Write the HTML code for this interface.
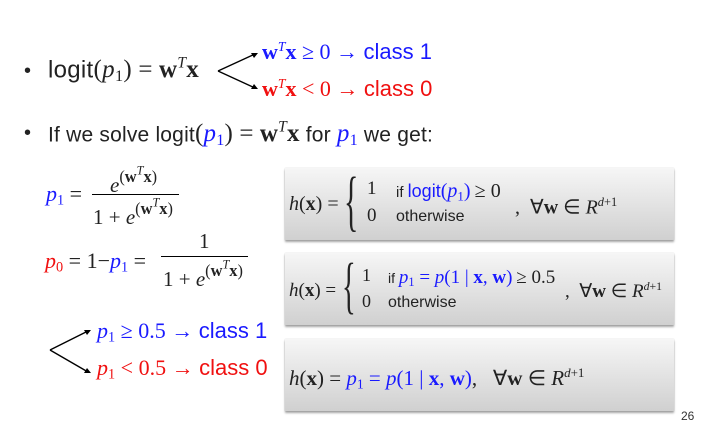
<!DOCTYPE html>
<html><head><meta charset="utf-8"><style>
body{margin:0;width:706px;height:420px;background:#fff;position:relative;overflow:hidden;font-family:"Liberation Sans",sans-serif;color:#222}
.a{position:absolute;white-space:nowrap;line-height:1}
.s{font-family:"Liberation Serif",serif}
.b{color:#1a1aff}.r{color:#f01010}
i{font-style:italic}
sub{font-size:65%;vertical-align:-0.25em}
sup{font-size:62%;vertical-align:0.6em}
.x{font-size:78%}
.e{margin:0 .25em}
.box{position:absolute;left:285px;width:389px;height:72px;background:linear-gradient(#f6f6f6,#d0d0d0);box-shadow:0 2px 2px rgba(0,0,0,.35),0 0 1px rgba(0,0,0,.2)}
.brace{font-family:"Liberation Serif",serif;font-weight:200;transform-origin:left top}
</style></head><body>
<div class="a" style="left:24px;top:61px;font-size:20px">•</div>
<div class="a" style="left:48px;top:56px;font-size:24px;letter-spacing:.3px">logit<span class="s" style="font-size:25px">(<i>p</i><sub>1</sub>)<span class="e">=</span><b>w</b><sup><i>T</i></sup><b>x</b></span></div>
<svg class="a" style="left:0;top:0" width="706" height="420">
<g stroke="#000" stroke-width="1.4" fill="none"><path d="M218 71 L255 54 M218 71 L255 88 M50 350 L88 331 M50 350 L88 372"/></g>
<g fill="#000"><path d="M258 53 l-7 0 l3 5z M258 89 l-7 0 l3-5z M91 330 l-7 0 l3 5z M91 373 l-7 0 l3-5z"/></g>
</svg>
<div class="a b" style="left:262px;top:40px;font-size:22px"><span class="s"><b>w</b><sup><i>T</i></sup><b>x</b><span class="e">≥</span>0<span class="e">→</span></span>class 1</div>
<div class="a r" style="left:262px;top:77px;font-size:22px"><span class="s"><b>w</b><sup><i>T</i></sup><b>x</b><span class="e">&lt;</span>0<span class="e">→</span></span>class 0</div>
<div class="a" style="left:24px;top:123px;font-size:20px">•</div>
<div class="a" style="left:48px;top:120px;font-size:21px;letter-spacing:.2px">If we solve logit<span class="s" style="font-size:25px">(<i class="b">p</i><sub class="b">1</sub>)<span class="e">=</span><b>w</b><sup><i>T</i></sup><b>x</b></span> for <span class="s b" style="font-size:25px"><i>p</i><sub>1</sub></span> we get:</div>
<div class="a s" style="left:46px;top:183px;font-size:22px"><span class="b"><i>p</i><sub>1</sub></span><span class="e">=</span></div>
<div class="a s" style="left:110px;top:165px;font-size:21px"><i>e</i><sup class="x">(<b>w</b><sup style="font-size:75%"><i>T</i></sup><b>x</b>)</sup></div>
<div class="a" style="left:92px;top:194px;width:87px;border-top:1px solid #000"></div>
<div class="a s" style="left:93px;top:197px;font-size:21px">1<span class="e">+</span><i>e</i><sup class="x">(<b>w</b><sup style="font-size:75%"><i>T</i></sup><b>x</b>)</sup></div>
<div class="a s" style="left:45px;top:250px;font-size:22px"><span class="r"><i>p</i><sub>0</sub></span><span class="e">=</span>1−<span class="b"><i>p</i><sub>1</sub></span><span class="e">=</span></div>
<div class="a s" style="left:199px;top:231px;font-size:21px">1</div>
<div class="a" style="left:161px;top:256px;width:87px;border-top:1px solid #000"></div>
<div class="a s" style="left:163px;top:259px;font-size:21px">1<span class="e">+</span><i>e</i><sup class="x">(<b>w</b><sup style="font-size:75%"><i>T</i></sup><b>x</b>)</sup></div>
<div class="a b" style="left:97px;top:320px;font-size:22px"><span class="s"><i>p</i><sub>1</sub><span class="e">≥</span>0.5<span class="e">→</span></span>class 1</div>
<div class="a r" style="left:97px;top:357px;font-size:22px"><span class="s"><i>p</i><sub>1</sub><span class="e">&lt;</span>0.5<span class="e">→</span></span>class 0</div>

<div class="box" style="top:168px"></div>
<div class="a s" style="left:289px;top:194px;font-size:20px"><i>h</i>(<b>x</b>)<span class="e">=</span></div>
<div class="a brace" style="left:344px;top:168px;font-size:46px;transform:scaleX(.65) scaleY(1.45)">{</div>
<div class="a s" style="left:367px;top:179px;font-size:19px">1</div>
<div class="a" style="left:396px;top:181px;font-size:15px">if <span class="b" style="font-size:18px">logit<span class="s" style="font-size:20px">(<i>p</i><sub>1</sub>)</span></span> <span class="s" style="font-size:20px">≥ 0</span></div>
<div class="a s" style="left:515px;top:196px;font-size:20px">,&nbsp; ∀<b>w</b> ∈ <i>R</i><sup><i>d</i>+1</sup></div>
<div class="a s" style="left:367px;top:206px;font-size:19px">0</div>
<div class="a" style="left:396px;top:209px;font-size:16px">otherwise</div>

<div class="box" style="top:253px"></div>
<div class="a s" style="left:289px;top:281px;font-size:19px"><i>h</i>(<b>x</b>)<span class="e">=</span></div>
<div class="a brace" style="left:342px;top:255px;font-size:44px;transform:scaleX(.65) scaleY(1.42)">{</div>
<div class="a s" style="left:362px;top:266px;font-size:18px">1</div>
<div class="a" style="left:388px;top:268px;font-size:14px">if <span class="s b" style="font-size:19px"><i>p</i><sub>1</sub> = <i>p</i>(1 | <b>x</b>, <b>w</b>)</span> <span class="s" style="font-size:19px">≥ 0.5</span></div>
<div class="a s" style="left:362px;top:292px;font-size:18px">0</div>
<div class="a" style="left:388px;top:295px;font-size:16px">otherwise</div>
<div class="a s" style="left:565px;top:281px;font-size:19px">,&nbsp; ∀<b>w</b> ∈ <i>R</i><sup><i>d</i>+1</sup></div>

<div class="box" style="top:339px"></div>
<div class="a s" style="left:289px;top:366px;font-size:21px"><i>h</i>(<b>x</b>)<span class="e">=</span><span class="b"><i>p</i><sub>1</sub><span class="e">=</span><i>p</i>(1 | <b>x</b>, <b>w</b>)</span>,&nbsp;&nbsp; ∀<b>w</b> ∈ <i>R</i><sup><i>d</i>+1</sup></div>
<div class="a" style="left:681px;top:410px;font-size:12px;color:#333">26</div>
</body></html>
